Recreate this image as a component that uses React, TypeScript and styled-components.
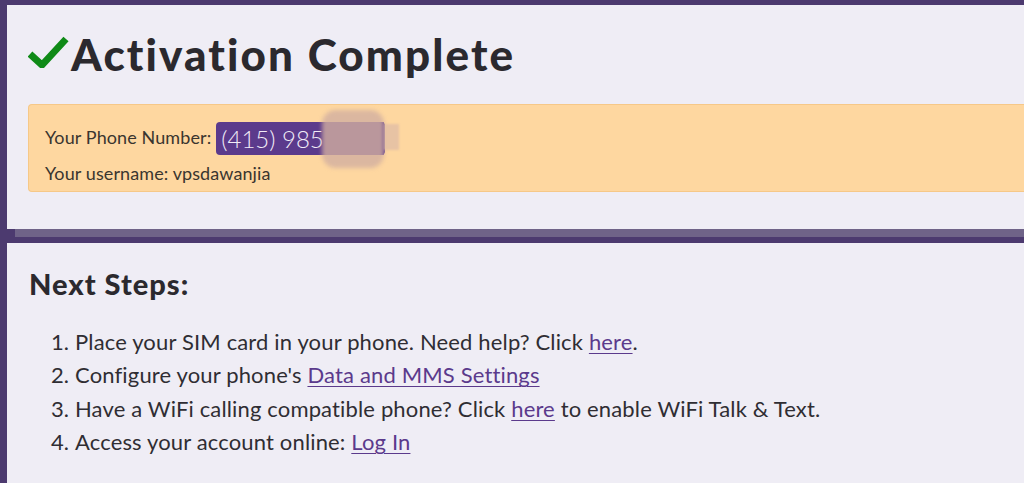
import React from "react";
import styled, { createGlobalStyle } from "styled-components";

const Global = createGlobalStyle`
  html, body { margin: 0; padding: 0; }
  body {
    background: #4c3a6f;
    font-family: "Lato", "Open Sans", sans-serif;
    color: #2f2d33;
    overflow: hidden;
  }
`;

const Page = styled.div`
  padding: 5px 0 0 7px;
  height: 478px;
  display: flex;
  flex-direction: column;
  gap: 14px;
`;

const TopPanel = styled.section`
  background: #efedf5;
  height: 224px;
  padding: 24px 0 0 21px;
  box-sizing: border-box;
  box-shadow: 8px 8px 0 #6f6388;
`;

const Title = styled.h1`
  margin: 0;
  display: flex;
  align-items: center;
  gap: 2px;
  font-family: "Lato", sans-serif;
  font-weight: 900;
  font-size: 44px;
  line-height: 50px;
  color: #2b292e;
  letter-spacing: 2.1px;
`;

const Check = styled.svg`
  width: 41px;
  height: 34px;
  flex: none;
  margin-top: -6px;
`;

const Alert = styled.div`
  margin-top: 25px;
  background: #fed7a0;
  border: 1px solid #f6c888;
  border-right: none;
  border-radius: 4px 0 0 4px;
  padding: 17px 16px 7px;
  font-size: 18px;
  letter-spacing: 0.1px;
  color: #3a352f;
`;

const PhoneRow = styled.div`
  display: flex;
  align-items: center;
  gap: 5px;
  height: 33px;
`;

const Label = styled.span`
  margin-top: -4px;
`;

const Badge = styled.span`
  position: relative;
  display: inline-flex;
  align-items: center;
  height: 33px;
  width: 169px;
  box-sizing: border-box;
  padding: 0 5px;
  background: #5b3a8c;
  border-radius: 4px;
  color: #f1ecf7;
  font-weight: 300;
  font-size: 24px;
  letter-spacing: 0;
  font-family: "Lato", sans-serif;
`;

const Smudge = styled.span`
  position: absolute;
  left: 106px;
  top: -12px;
  width: 62px;
  height: 58px;
  border-radius: 14px;
  background: rgba(210, 175, 160, 0.8);
  filter: blur(2px);
`;

const SmudgeInner = styled.span`
  position: absolute;
  left: 110px;
  top: 0;
  width: 58px;
  height: 33px;
  background: #5b3a8c;
  opacity: 0.75;
`;

const SmudgeTail = styled.span`
  position: absolute;
  left: 168px;
  top: 2px;
  width: 15px;
  height: 26px;
  background: rgba(225, 190, 165, 0.8);
  filter: blur(1px);
`;

const UserRow = styled.div`
  margin-top: 7px;
  line-height: 22px;
`;

const BottomPanel = styled.section`
  flex: 1;
  background: #efedf5;
  padding: 24px 0 0 22px;
`;

const Heading = styled.h2`
  margin: 0;
  font-family: "Lato", sans-serif;
  font-weight: 900;
  font-size: 29px;
  line-height: 34px;
  letter-spacing: 1px;
  color: #2b292e;
`;

const Steps = styled.ol`
  margin: 24px 0 0;
  padding-left: 46px;
  font-size: 22px;
  line-height: 33.3px;
  letter-spacing: 0.15px;
  color: #2f2d33;
`;

const Link = styled.a`
  color: #5b3a8c;
  text-decoration: underline;
  text-underline-offset: 3px;
  text-decoration-thickness: 1px;
`;

export default function App() {
  return (
    <>
      <Global />
      <Page>
        <TopPanel>
          <Title>
            <Check viewBox="0 0 41 34">
              <path d="M2 20 L14 31 L38 5" fill="none" stroke="#0f8a17" strokeWidth="7" strokeLinejoin="miter" />
            </Check>
            Activation Complete
          </Title>
          <Alert>
            <PhoneRow>
              <Label>Your Phone Number:</Label>
              <Badge>
                (415) 985
                <SmudgeInner />
                <Smudge />
                <SmudgeTail />
              </Badge>
            </PhoneRow>
            <UserRow>Your username: vpsdawanjia</UserRow>
          </Alert>
        </TopPanel>
        <BottomPanel>
          <Heading>Next Steps:</Heading>
          <Steps>
            <li>
              Place your SIM card in your phone. Need help? Click <Link href="#">here</Link>.
            </li>
            <li>
              Configure your phone's <Link href="#">Data and MMS Settings</Link>
            </li>
            <li>
              Have a WiFi calling compatible phone? Click <Link href="#">here</Link> to enable WiFi Talk &amp; Text.
            </li>
            <li>
              Access your account online: <Link href="#">Log In</Link>
            </li>
          </Steps>
        </BottomPanel>
      </Page>
    </>
  );
}
